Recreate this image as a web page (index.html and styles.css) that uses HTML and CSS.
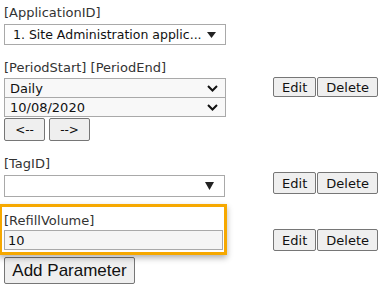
FILE: index.html
```html
<!DOCTYPE html>
<html lang="en">
<head>
    <meta charset="UTF-8">
    <meta name="viewport" content="width=device-width, initial-scale=1.0">
    <title>Parameters</title>
    <link rel="stylesheet" href="styles.css">
</head>
<body>
    <!-- ApplicationID -->
    <div class="param-row">
        <div class="param-fields">
            <div class="param-label">[ApplicationID]</div>
            <div class="fake-select wide">
                <span class="select-text">1. Site Administration applic...</span>
                <svg class="tri" width="9" height="6" viewBox="0 0 9 6"><path d="M0 0h9L4.5 6z" fill="#222"/></svg>
            </div>
        </div>
    </div>

    <!-- Period -->
    <div class="param-row">
        <div class="param-fields">
            <div class="param-label">[PeriodStart] [PeriodEnd]</div>
            <div class="fake-select grey">
                <span class="select-text">Daily</span>
                <svg class="chev" width="11" height="7" viewBox="0 0 11 7"><path d="M1 1l4.5 4.5L10 1" stroke="#111" stroke-width="2" fill="none"/></svg>
            </div>
            <div class="fake-select grey joined">
                <span class="select-text">10/08/2020</span>
                <svg class="chev" width="11" height="7" viewBox="0 0 11 7"><path d="M1 1l4.5 4.5L10 1" stroke="#111" stroke-width="2" fill="none"/></svg>
            </div>
            <div class="nav-btns">
                <button class="btn nav-btn">&lt;--</button>
                <button class="btn nav-btn">--&gt;</button>
            </div>
        </div>
        <div class="param-actions">
            <button class="btn">Edit</button><button class="btn">Delete</button>
        </div>
    </div>

    <!-- TagID -->
    <div class="param-row">
        <div class="param-fields">
            <div class="param-label">[TagID]</div>
            <div class="fake-select tag">
                <span class="select-text"></span>
                <svg class="tri" width="9" height="8" viewBox="0 0 9 8"><path d="M0 0h9L4.5 8z" fill="#222"/></svg>
            </div>
        </div>
        <div class="param-actions tag-actions">
            <button class="btn">Edit</button><button class="btn">Delete</button>
        </div>
    </div>

    <!-- RefillVolume (selected) -->
    <div class="param-row selected-row">
        <div class="param-fields highlight">
            <div class="param-label">[RefillVolume]</div>
            <input class="text-input" type="text" value="10">
        </div>
        <div class="param-actions refill-actions">
            <button class="btn">Edit</button><button class="btn">Delete</button>
        </div>
    </div>

    <button class="add-btn">Add Parameter</button>
</body>
</html>
```

FILE: styles.css
```css
body {
    margin: 0;
    padding: 4px 7px 0 4px;
    font-family: "DejaVu Sans", Verdana, sans-serif;
    font-size: 13px;
    color: #222;
    background-color: white;
}
.param-row {
    display: flex;
    align-items: flex-start;
    margin-bottom: 14px;
}
.param-fields {
    width: 222px;
}
.param-label {
    color: #333;
    height: 18px;
    line-height: 16px;
    padding-top: 1px;
    white-space: nowrap;
}
.param-actions {
    margin-left: auto;
    padding-top: 18px;
    display: flex;
}
.fake-select {
    display: flex;
    align-items: center;
    height: 20px;
    border: 1px solid #a9a9a9;
    background-color: white;
    padding: 0 8px 0 8px;
    margin-top: 1px;
}
.fake-select.wide {
    height: 19px;
    padding-right: 9px;
}
.fake-select.grey {
    height: 18px;
    background-color: #f8f8f8;
    padding-left: 5px;
    padding-right: 7px;
    margin-top: 0;
}
.fake-select.joined {
    margin-top: -1px;
}
.fake-select.tag {
    width: 201px;
    height: 20px;
    padding-right: 10px;
}
.select-text {
    flex: 1;
    white-space: nowrap;
    overflow: hidden;
    font-size: 13px;
    color: #111;
}
.wide .select-text {
    font-size: 12.5px;
}
.tri, .chev {
    flex: none;
    margin-left: 6px;
}
.nav-btns {
    display: flex;
    gap: 4px;
    margin-top: 1px;
}
.btn {
    font-family: "DejaVu Sans", Verdana, sans-serif;
    font-size: 13px;
    color: #111;
    background-color: #efefef;
    border: 1px solid #767676;
    border-radius: 2px;
    height: 20px;
    padding: 0 8px;
    margin: 0;
}
.nav-btn {
    width: 41px;
    height: 23px;
    font-size: 12px;
    padding: 0;
}
.param-actions .btn + .btn {
    margin-left: 1px;
}
.tag-actions {
    padding-top: 17px;
}
.tag-actions .btn, .refill-actions .btn {
    height: 22px;
}
.selected-row {
    margin-top: -7px;
    margin-bottom: 0;
}
.highlight {
    width: 220px;
    margin-left: -5px;
    padding: 5px 0 2px 2px;
    border: 3px solid #f6a800;
    box-shadow: 0 3px 6px rgba(0, 0, 0, 0.3);
}
.highlight .param-label {
    height: 17px;
}
.text-input {
    display: block;
    width: 219px;
    height: 20px;
    box-sizing: border-box;
    border: 1px solid #a9a9a9;
    background-color: #f5f5f5;
    font-family: "DejaVu Sans", Verdana, sans-serif;
    font-size: 13px;
    color: #111;
    padding: 0 3px;
    margin: 0;
}
.refill-actions {
    padding-top: 25px;
}
.add-btn {
    display: block;
    margin-top: 2px;
    font-family: "Liberation Sans", Arial, sans-serif;
    font-size: 17px;
    color: #111;
    background-color: #efefef;
    border: 1px solid #767676;
    border-radius: 2px;
    width: 131px;
    height: 27px;
    padding: 0;
}
```
